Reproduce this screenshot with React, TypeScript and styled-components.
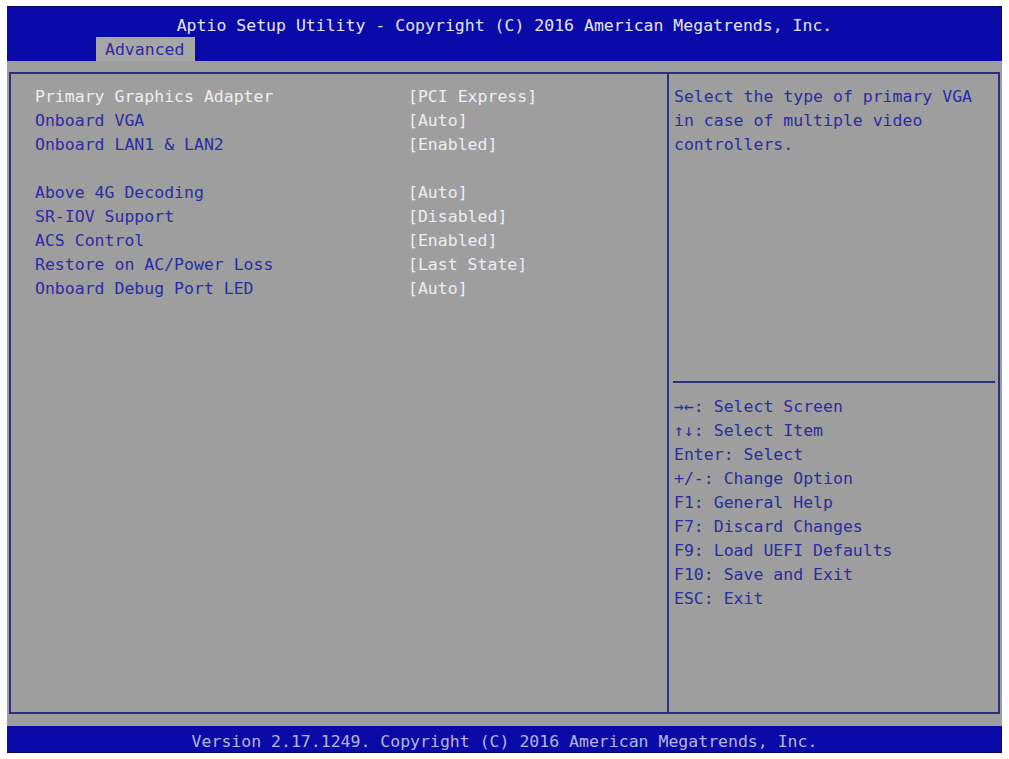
import styled, { createGlobalStyle } from "styled-components";

const GlobalStyle = createGlobalStyle`
  body {
    margin: 0;
    background: #ffffff;
  }
`;

const mono = `"DejaVu Sans Mono", "Liberation Mono", monospace`;

const Screen = styled.div`
  width: 995px;
  margin: 6px 0 0 7px;
  display: flex;
  flex-direction: column;
  font-family: ${mono};
  font-size: 16.5px;
`;

const Header = styled.div`
  height: 55px;
  background: #0a0aa8;
  border-top: 1px solid #05055a;
  box-sizing: border-box;
  display: flex;
  flex-direction: column;
`;

const Title = styled.div`
  height: 30px;
  padding-top: 7px;
  box-sizing: border-box;
  line-height: 24px;
  text-align: center;
  color: #e4e4f2;
  white-space: pre;
`;

const Tab = styled.div`
  width: 99px;
  height: 24px;
  margin-left: 89px;
  padding-left: 9px;
  box-sizing: border-box;
  line-height: 26px;
  background: #a6a6a6;
  color: #2c2ca0;
`;

const Body = styled.div`
  background: #9e9e9e;
  padding: 11px 2px 12px 2px;
`;

const Panel = styled.div`
  height: 642px;
  box-sizing: border-box;
  border: 2px solid #2e2e7e;
  display: grid;
  grid-template-columns: 658px 1fr;
`;

const Main = styled.div`
  padding: 11px 0 0 24px;
  border-right: 2px solid #2e2e7e;
`;

const Row = styled.div<{ $selected?: boolean }>`
  display: flex;
  height: 24px;
  line-height: 24px;
  white-space: pre;
  color: ${(p) => (p.$selected ? "#ededf3" : "#2c2ca4")};
`;

const Label = styled.span`
  width: 373px;
`;

const Value = styled.span`
  color: #ececf4;
`;

const Help = styled.div`
  display: flex;
  flex-direction: column;
`;

const HelpText = styled.div`
  height: 309px;
  padding: 11px 0 0 1px;
  margin: 0 3px 0 4px;
  box-sizing: border-box;
  border-bottom: 2px solid #2e2e7e;
`;

const KeyList = styled.div`
  padding: 12px 0 0 5px;
`;

const Line = styled.div`
  height: 24px;
  line-height: 24px;
  white-space: pre;
  color: #2c2ca4;
`;

const Footer = styled.div`
  height: 27px;
  padding-top: 4px;
  box-sizing: border-box;
  line-height: 23px;
  background: #0a0aa8;
  border-bottom: 1px solid #05055a;
  text-align: center;
  color: #b6b6da;
  white-space: pre;
`;

const items: { label: string; value: string; selected?: boolean }[] = [
  { label: "Primary Graphics Adapter", value: "[PCI Express]", selected: true },
  { label: "Onboard VGA", value: "[Auto]" },
  { label: "Onboard LAN1 & LAN2", value: "[Enabled]" },
  { label: "", value: "" },
  { label: "Above 4G Decoding", value: "[Auto]" },
  { label: "SR-IOV Support", value: "[Disabled]" },
  { label: "ACS Control", value: "[Enabled]" },
  { label: "Restore on AC/Power Loss", value: "[Last State]" },
  { label: "Onboard Debug Port LED", value: "[Auto]" },
];

const helpLines = [
  "Select the type of primary VGA",
  "in case of multiple video",
  "controllers.",
];

const keys = [
  "→←: Select Screen",
  "↑↓: Select Item",
  "Enter: Select",
  "+/-: Change Option",
  "F1: General Help",
  "F7: Discard Changes",
  "F9: Load UEFI Defaults",
  "F10: Save and Exit",
  "ESC: Exit",
];

export default function App() {
  return (
    <>
      <GlobalStyle />
      <Screen>
        <Header>
          <Title>Aptio Setup Utility - Copyright (C) 2016 American Megatrends, Inc.</Title>
          <Tab>Advanced</Tab>
        </Header>
        <Body>
          <Panel>
            <Main>
              {items.map((it, i) => (
                <Row key={i} $selected={it.selected}>
                  <Label>{it.label}</Label>
                  {it.selected ? <span>{it.value}</span> : <Value>{it.value}</Value>}
                </Row>
              ))}
            </Main>
            <Help>
              <HelpText>
                {helpLines.map((l) => (
                  <Line key={l}>{l}</Line>
                ))}
              </HelpText>
              <KeyList>
                {keys.map((k) => (
                  <Line key={k}>{k}</Line>
                ))}
              </KeyList>
            </Help>
          </Panel>
        </Body>
        <Footer>Version 2.17.1249. Copyright (C) 2016 American Megatrends, Inc.</Footer>
      </Screen>
    </>
  );
}
